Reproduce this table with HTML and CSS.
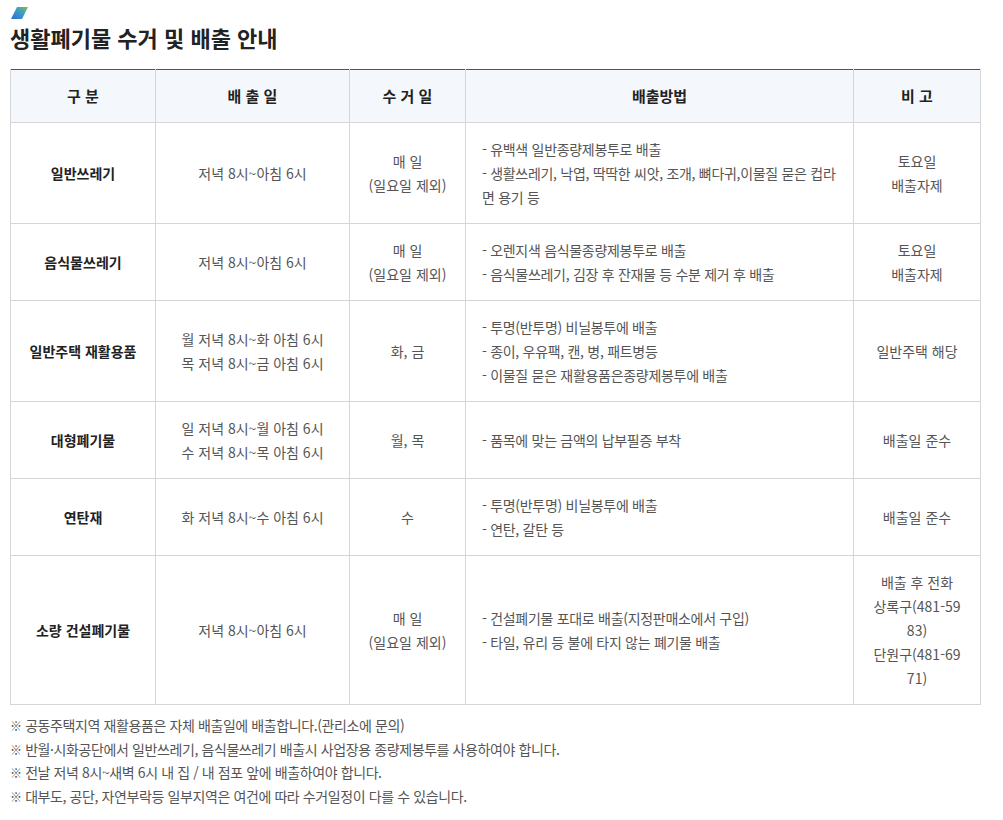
FILE: index.html
```html
<!DOCTYPE html>
<html lang="ko">
<head>
<meta charset="utf-8">
<title>생활폐기물 수거 및 배출 안내</title>
<link rel="stylesheet" href="styles.css">
</head>
<body>
<div class="page">
  <div class="logo">
    <svg width="18" height="12" viewBox="0 0 18 12" aria-hidden="true">
      <defs>
        <linearGradient id="g" x1="0" y1="1" x2="1" y2="0">
          <stop offset="0" stop-color="#2f6fd1"/>
          <stop offset="0.55" stop-color="#3b9bc9"/>
          <stop offset="1" stop-color="#7cc24a"/>
        </linearGradient>
      </defs>
      <polygon points="6,0 17,0 11,12 0,12" fill="url(#g)"/>
    </svg>
  </div>
  <h1 class="title">생활폐기물 수거 및 배출 안내</h1>
  <table class="guide">
    <colgroup>
      <col class="c1"><col class="c2"><col class="c3"><col class="c4"><col class="c5">
    </colgroup>
    <thead>
      <tr><th>구 분</th><th>배 출 일</th><th>수 거 일</th><th>배출방법</th><th>비 고</th></tr>
    </thead>
    <tbody>
      <tr>
        <th class="kind">일반쓰레기</th>
        <td>저녁 8시~아침 6시</td>
        <td>매 일<br>(일요일 제외)</td>
        <td class="method">- 유백색 일반종량제봉투로 배출<br>- 생활쓰레기, 낙엽, 딱딱한 씨앗, 조개, 뼈다귀,이물질 묻은 컵라면 용기 등</td>
        <td>토요일<br>배출자제</td>
      </tr>
      <tr>
        <th class="kind">음식물쓰레기</th>
        <td>저녁 8시~아침 6시</td>
        <td>매 일<br>(일요일 제외)</td>
        <td class="method">- 오렌지색 음식물종량제봉투로 배출<br>- 음식물쓰레기, 김장 후 잔재물 등 수분 제거 후 배출</td>
        <td>토요일<br>배출자제</td>
      </tr>
      <tr>
        <th class="kind">일반주택 재활용품</th>
        <td>월 저녁 8시~화 아침 6시<br>목 저녁 8시~금 아침 6시</td>
        <td>화, 금</td>
        <td class="method">- 투명(반투명) 비닐봉투에 배출<br>- 종이, 우유팩, 캔, 병, 패트병등<br>- 이물질 묻은 재활용품은종량제봉투에 배출</td>
        <td>일반주택 해당</td>
      </tr>
      <tr>
        <th class="kind">대형폐기물</th>
        <td>일 저녁 8시~월 아침 6시<br>수 저녁 8시~목 아침 6시</td>
        <td>월, 목</td>
        <td class="method">- 품목에 맞는 금액의 납부필증 부착</td>
        <td>배출일 준수</td>
      </tr>
      <tr>
        <th class="kind">연탄재</th>
        <td>화 저녁 8시~수 아침 6시</td>
        <td>수</td>
        <td class="method">- 투명(반투명) 비닐봉투에 배출<br>- 연탄, 갈탄 등</td>
        <td>배출일 준수</td>
      </tr>
      <tr>
        <th class="kind">소량 건설폐기물</th>
        <td>저녁 8시~아침 6시</td>
        <td>매 일<br>(일요일 제외)</td>
        <td class="method">- 건설폐기물 포대로 배출(지정판매소에서 구입)<br>- 타일, 유리 등 불에 타지 않는 폐기물 배출</td>
        <td class="note">배출 후 전화<br>상록구(481-5983)<br>단원구(481-6971)</td>
      </tr>
    </tbody>
  </table>
  <ul class="notes">
    <li><span class="mark">※</span> 공동주택지역 재활용품은 자체 배출일에 배출합니다.(관리소에 문의)</li>
    <li><span class="mark">※</span> 반월·시화공단에서 일반쓰레기, 음식물쓰레기 배출시 사업장용 종량제봉투를 사용하여야 합니다.</li>
    <li><span class="mark">※</span> 전날 저녁 8시~새벽 6시 내 집 / 내 점포 앞에 배출하여야 합니다.</li>
    <li><span class="mark">※</span> 대부도, 공단, 자연부락등 일부지역은 여건에 따라 수거일정이 다를 수 있습니다.</li>
  </ul>
</div>
</body>
</html>
```

FILE: styles.css
```css
html, body {
  margin: 0;
  padding: 0;
  background: #fff;
}
body {
  font-family: "Noto Sans CJK KR", "Noto Sans", sans-serif;
  color: #555;
}
.page {
  padding: 7px 23px 0 10px;
}
.logo {
  height: 13px;
  padding-left: 1px;
}
.logo svg {
  display: block;
}
.title {
  margin: 2px 0 17px;
  font-size: 22px;
  line-height: 30px;
  font-weight: 700;
  color: #222;
  letter-spacing: 0;
}
.guide {
  width: 970px;
  table-layout: fixed;
  border-collapse: collapse;
  border-top: 1px solid #2c607f;
  word-break: break-all;
}
.c1 { width: 145px; }
.c2 { width: 194px; }
.c3 { width: 116px; }
.c4 { width: 388px; }
.c5 { width: 127px; }
.guide th,
.guide td {
  border: 1px solid #d6d6d6;
  padding: 14px 16px;
  font-size: 14px;
  line-height: 24px;
  text-align: center;
  vertical-align: middle;
}
.guide thead th {
  background: #f4f8fd;
  color: #222;
  font-size: 15px;
  font-weight: 700;
  border-top: 0;
}
.guide tbody th.kind {
  color: #222;
  font-weight: 700;
}
.guide td {
  color: #555;
  font-weight: 400;
}
.guide td.method {
  text-align: left;
  letter-spacing: -0.3px;
}
.notes {
  list-style: none;
  margin: 9px 0 0;
  padding: 0;
  font-size: 14px;
  line-height: 23.7px;
  color: #555;
  letter-spacing: -0.4px;
}
.mark {
  font-size: 12px;
  color: #555;
  font-weight: 700;
}
```
